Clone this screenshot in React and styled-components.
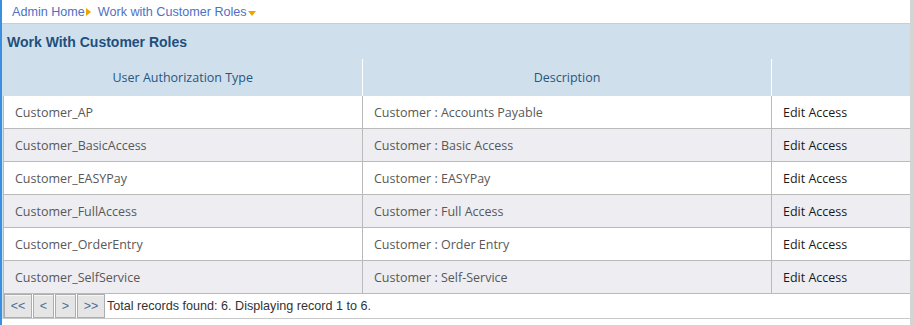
import React from "react";
import styled, { createGlobalStyle } from "styled-components";

const Global = createGlobalStyle`
  html, body { margin: 0; padding: 0; background: #fff; }
  body { font-family: "Open Sans", "Noto Sans", sans-serif; }
`;

const Page = styled.div`
  border-left: 2px solid #3b8fe0;
  border-right: 3px solid #d4d4d4;
  min-height: 325px;
  box-sizing: border-box;
`;

const Breadcrumb = styled.nav`
  height: 23px;
  border-bottom: 1px solid #cdcdcd;
  display: flex;
  align-items: center;
  padding-left: 10px;
  font-family: "Liberation Sans", Arial, sans-serif;
  font-size: 12.6px;
  color: #4f6fc6;
`;

const Crumb = styled.span`
  display: inline-flex;
  align-items: center;
`;

const Arrow = styled.span`
  display: inline-block;
  width: 0;
  height: 0;
  margin: ${(p) => (p.$down ? "3px 4px 0 1px" : "1px 7px 0 1px")};
  ${(p) =>
    p.$down
      ? `border-left: 4px solid transparent; border-right: 4px solid transparent; border-top: 5px solid #f0a300;`
      : `border-top: 4px solid transparent; border-bottom: 4px solid transparent; border-left: 5px solid #f0a300;`}
`;

const Panel = styled.section`
  background: #cfe0ec;
`;

const Title = styled.h2`
  margin: 0;
  height: 35px;
  display: flex;
  align-items: center;
  padding-left: 5px;
  font-family: "Liberation Sans", Arial, sans-serif;
  font-weight: bold;
  font-size: 14px;
  color: #1f4f7c;
`;

const Table = styled.table`
  margin-left: 1px;
  width: calc(100% - 1px);
  border-collapse: collapse;
  table-layout: fixed;
  font-size: 12.5px;
`;

const HeadCell = styled.th`
  height: 37px;
  padding: 0;
  font-weight: normal;
  color: #2a557f;
  text-align: center;
  background: #cfe0ec;
  border-left: 1px solid #ffffff;
  &:first-child { border-left: none; }
`;

const Row = styled.tr`
  background: ${(p) => (p.$alt ? "#ededf2" : "#ffffff")};
`;

const Cell = styled.td`
  height: 32px;
  padding: 0 0 0 11px;
  border: 1px solid #bababa;
  border-top: none;
  color: ${(p) => (p.$dark ? "#1a1a1a" : "#585858")};
  white-space: nowrap;
  &:last-child { border-right: none; }
`;

const PagerCell = styled.td`
  padding: 0;
  height: 24px;
  border-left: 1px solid #bababa;
  border-bottom: 1px solid #c8c8c8;
  background: #fff;
`;

const Pager = styled.div`
  display: flex;
  align-items: center;
  gap: 1px;
  font-family: "Liberation Sans", Arial, sans-serif;
  font-size: 12.6px;
  color: #333;
`;

const PageButton = styled.button`
  height: 24px;
  width: ${(p) => (p.$wide ? "28px" : "21px")};
  padding: 0;
  border: 1px solid #adadad;
  background: #e5e5e5;
  color: #4f6c97;
  font-family: "Liberation Sans", Arial, sans-serif;
  font-size: 12.5px;
  box-shadow: inset 0 1px 0 #f6f6f6;
  cursor: pointer;
`;

const Summary = styled.span`
  margin-left: 1px;
`;

const rows = [
  ["Customer_AP", "Customer : Accounts Payable"],
  ["Customer_BasicAccess", "Customer : Basic Access"],
  ["Customer_EASYPay", "Customer : EASYPay"],
  ["Customer_FullAccess", "Customer : Full Access"],
  ["Customer_OrderEntry", "Customer : Order Entry"],
  ["Customer_SelfService", "Customer : Self-Service"],
];

export default function App() {
  return (
    <>
      <Global />
      <Page>
        <Breadcrumb>
          <Crumb>
            Admin Home
            <Arrow />
          </Crumb>
          <Crumb>
            Work with Customer Roles
            <Arrow $down />
          </Crumb>
        </Breadcrumb>
        <Panel>
          <Title>Work With Customer Roles</Title>
          <Table>
            <colgroup>
              <col style={{ width: "359px" }} />
              <col style={{ width: "409px" }} />
              <col />
            </colgroup>
            <thead>
              <tr>
                <HeadCell>User Authorization Type</HeadCell>
                <HeadCell>Description</HeadCell>
                <HeadCell />
              </tr>
            </thead>
            <tbody>
              {rows.map(([type, desc], i) => (
                <Row key={type} $alt={i % 2 === 1}>
                  <Cell>{type}</Cell>
                  <Cell>{desc}</Cell>
                  <Cell $dark>Edit Access</Cell>
                </Row>
              ))}
            </tbody>
            <tfoot>
              <tr>
                <PagerCell colSpan={3}>
                  <Pager>
                    <PageButton $wide>&lt;&lt;</PageButton>
                    <PageButton>&lt;</PageButton>
                    <PageButton>&gt;</PageButton>
                    <PageButton $wide>&gt;&gt;</PageButton>
                    <Summary>Total records found: 6. Displaying record 1 to 6.</Summary>
                  </Pager>
                </PagerCell>
              </tr>
            </tfoot>
          </Table>
        </Panel>
      </Page>
    </>
  );
}
